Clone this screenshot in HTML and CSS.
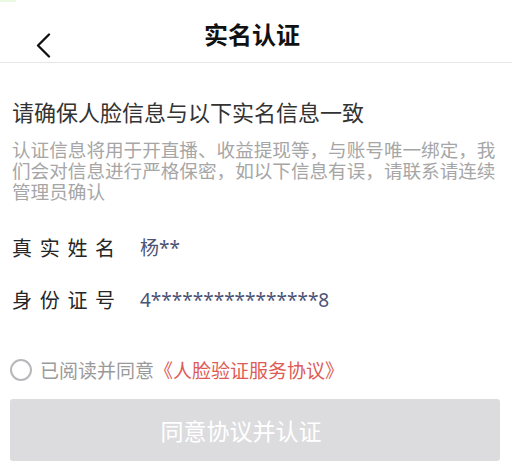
FILE: index.html
```html
<!DOCTYPE html>
<html lang="zh-CN">
<head>
<meta charset="utf-8">
<title>实名认证</title>
<link rel="stylesheet" href="styles.css">
</head>
<body>
<div class="status-mark"></div>
<header class="nav">
  <div class="nav-left">
    <svg class="back" width="16" height="25" viewBox="0 0 16 25" aria-hidden="true">
      <polyline points="14,1.5 3,12.5 14,23.5" fill="none" stroke="#111" stroke-width="2.3" stroke-linecap="round" stroke-linejoin="round"/>
    </svg>
  </div>
  <h1 class="nav-title">实名认证</h1>
  <div class="nav-right"></div>
</header>
<main class="content">
  <h2 class="heading">请确保人脸信息与以下实名信息一致</h2>
  <p class="note">认证信息将用于开直播、收益提现等，与账号唯一绑定，我们会对信息进行严格保密，如以下信息有误，请联系请连续管理员确认</p>
  <div class="info">
    <div class="row"><span class="label">真实姓名</span><span class="value">杨**</span></div>
    <div class="row"><span class="label">身份证号</span><span class="value">4****************8</span></div>
  </div>
  <label class="agree">
    <span class="radio"></span>
    <span class="agree-text">已阅读并同意</span><span class="agree-link">《人脸验证服务协议》</span>
  </label>
  <button class="submit" type="button">同意协议并认证</button>
</main>
</body>
</html>
```

FILE: styles.css
```css
* { box-sizing: border-box; }
html, body {
  margin: 0;
  padding: 0;
  background: #fff;
  font-family: "Noto Sans CJK SC", "Noto Sans", sans-serif;
}
.status-mark {
  width: 16px;
  height: 2px;
  background: #e9f9e2;
}
.nav {
  height: 61px;
  border-bottom: 1px solid #e6e6e6;
  display: grid;
  grid-template-columns: 1fr auto 1fr;
  padding-top: 20px;
}
.nav-left {
  padding-left: 35px;
  padding-top: 11px;
}
.back { display: block; }
.nav-title {
  margin: 0;
  padding-right: 8px;
  font-size: 24px;
  line-height: 24px;
  font-weight: 700;
  color: #111;
}
.content {
  padding: 0 12px 0 10px;
}
.heading {
  margin: 37px 0 0 2px;
  font-size: 22px;
  line-height: 22px;
  font-weight: 400;
  color: #333;
}
.note {
  margin: 16px 0 0 2px;
  width: 488px;
  font-size: 18.6px;
  line-height: 21px;
  color: #a6a6a6;
}
.info {
  margin-top: 37px;
  margin-left: 2px;
  display: flex;
  flex-direction: column;
  gap: 32px;
}
.row {
  display: grid;
  grid-template-columns: 128px 1fr;
  line-height: 20px;
}
.label {
  font-size: 20px;
  letter-spacing: 7.7px;
  color: #262626;
}
.value {
  font-family: "Noto Sans", "Noto Sans CJK SC", sans-serif;
  font-size: 19px;
  color: #4b5377;
}
.agree {
  margin-top: 49px;
  display: flex;
  align-items: center;
  height: 22px;
  font-size: 19px;
  line-height: 22px;
}
.radio {
  width: 22px;
  height: 22px;
  border: 2px solid #b8b8bc;
  border-radius: 50%;
  margin-right: 8px;
  flex: none;
}
.agree-text { color: #9a9a9a; }
.agree-link { color: #de5b55; }
.submit {
  display: block;
  width: 490px;
  height: 62px;
  margin-top: 18px;
  border: none;
  border-radius: 3px;
  background: #dcdcde;
  color: #fff;
  font-family: "Noto Sans CJK SC", sans-serif;
  font-size: 23px;
  padding: 0 28px 0 0;
}
```
